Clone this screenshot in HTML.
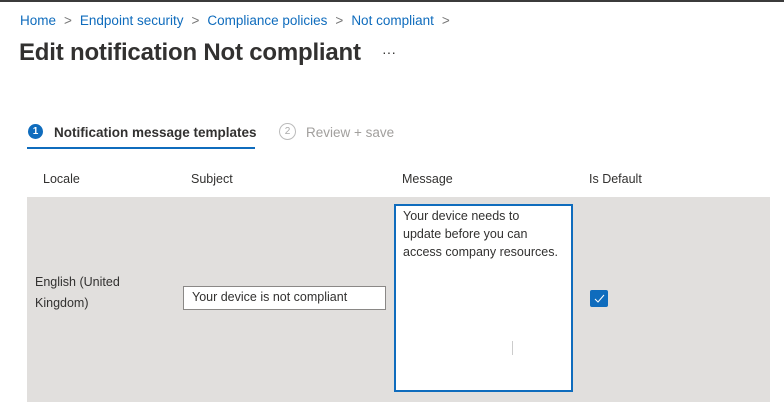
<!DOCTYPE html>
<html><head><style>
body{margin:0;width:784px;height:402px;overflow:hidden;background:#fff;font-family:"Liberation Sans",sans-serif;position:relative}
.a{position:absolute;white-space:nowrap}
.s{color:#777;margin:0 8px}
</style></head><body>
<div class="a" style="left:0;top:0;width:784px;height:2px;background:#3b3b3b"></div>
<div class="a" style="left:20px;top:13px;font-size:13.5px;color:#0f6cbd">Home<span class="s">&gt;</span>Endpoint security<span class="s">&gt;</span>Compliance policies<span class="s">&gt;</span>Not compliant<span class="s">&gt;</span></div>
<div class="a" style="left:19px;top:39px;font-size:24px;font-weight:bold;color:#323130;letter-spacing:-0.2px">Edit notification Not compliant</div>
<div class="a" style="left:382px;top:44px;font-size:14px;color:#323130">···</div>
<div class="a" style="left:28px;top:124px;width:15px;height:15px;border-radius:50%;background:#0f6cbd;color:#fff;font-size:10px;font-weight:bold;text-align:center;line-height:15px">1</div>
<div class="a" style="left:54px;top:125px;font-size:13.5px;font-weight:bold;color:#323130">Notification message templates</div>
<div class="a" style="left:27px;top:147px;width:228px;height:2px;background:#0f6cbd"></div>
<div class="a" style="left:279px;top:123px;width:15px;height:15px;border-radius:50%;border:1px solid #bbb;color:#aaa;font-size:10px;text-align:center;line-height:15px">2</div>
<div class="a" style="left:306px;top:125px;font-size:13.5px;color:#a19f9d">Review + save</div>
<div class="a" style="left:43px;top:172px;font-size:12.5px;color:#323130">Locale</div>
<div class="a" style="left:191px;top:172px;font-size:12.5px;color:#323130">Subject</div>
<div class="a" style="left:402px;top:172px;font-size:12.5px;color:#323130">Message</div>
<div class="a" style="left:589px;top:172px;font-size:12.5px;color:#323130">Is Default</div>
<div class="a" style="left:27px;top:197px;width:743px;height:205px;background:#e1dfdd"></div>
<div class="a" style="left:35px;top:272px;font-size:12.5px;color:#323130;line-height:21px">English (United<br>Kingdom)</div>
<div class="a" style="left:183px;top:286px;width:201px;height:22px;background:#fff;border:1px solid #8a8886"></div>
<div class="a" style="left:192px;top:290px;font-size:12.5px;color:#323130">Your device is not compliant</div>
<div class="a" style="left:394px;top:204px;width:175px;height:184px;background:#fff;border:2px solid #0f6cbd"></div>
<div class="a" style="left:403px;top:207px;font-size:12.5px;color:#323130;line-height:18px">Your device needs to<br>update before you can<br>access company resources.</div>
<div class="a" style="left:512px;top:341px;width:1px;height:14px;background:#ccc"></div>
<div class="a" style="left:590px;top:290px;width:18px;height:17px;background:#0f6cbd;border-radius:2px"><svg width="18" height="17"><path d="M5 9l3 3 6-7" stroke="#fff" stroke-width="1" fill="none"/></svg></div>
</body></html>
